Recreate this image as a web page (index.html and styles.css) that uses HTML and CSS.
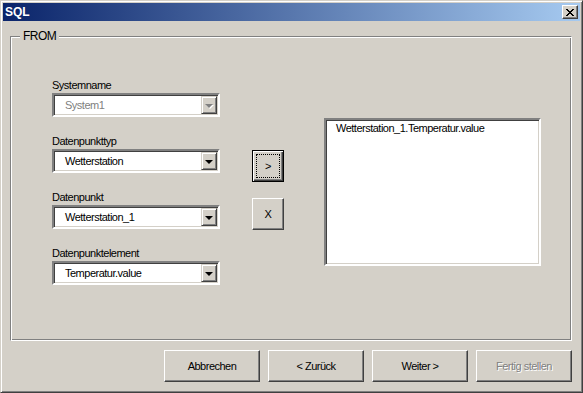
FILE: index.html
```html
<!DOCTYPE html>
<html lang="de">
<head>
    <meta charset="UTF-8">
    <title>SQL</title>
    <link rel="stylesheet" href="styles.css">
</head>
<body>
    <div class="window">
        <div class="titlebar">
            <span class="title">SQL</span>
            <button class="close-btn">
                <svg width="8" height="7" viewBox="0 0 8 7">
                    <path d="M0 0h2v1h1v1h2v-1h1v-1h2v1h-1v1h-1v1h-1v1h1v1h1v1h1v1h-2v-1h-1v-1h-2v1h-1v1h-2v-1h1v-1h1v-1h1v-1h-1v-1h-1v-1h-1z" fill="#000"/>
                </svg>
            </button>
        </div>

        <div class="content">
            <fieldset class="group">
                <legend>FROM</legend>
                <div class="group-body">
                    <div class="fields">
                        <div class="field">
                            <label>Systemname</label>
                            <div class="combo disabled">
                                <span class="combo-text">System1</span>
                                <span class="combo-btn"><span class="arrow"></span></span>
                            </div>
                        </div>
                        <div class="field">
                            <label>Datenpunkttyp</label>
                            <div class="combo">
                                <span class="combo-text">Wetterstation</span>
                                <span class="combo-btn"><span class="arrow"></span></span>
                            </div>
                        </div>
                        <div class="field">
                            <label>Datenpunkt</label>
                            <div class="combo">
                                <span class="combo-text">Wetterstation_1</span>
                                <span class="combo-btn"><span class="arrow"></span></span>
                            </div>
                        </div>
                        <div class="field">
                            <label>Datenpunktelement</label>
                            <div class="combo">
                                <span class="combo-text">Temperatur.value</span>
                                <span class="combo-btn"><span class="arrow"></span></span>
                            </div>
                        </div>
                    </div>

                    <div class="movers">
                        <button class="btn small default"><span class="focus">&gt;</span></button>
                        <button class="btn small">X</button>
                    </div>

                    <div class="listbox">
                        <div class="list-item">Wetterstation_1.Temperatur.value</div>
                    </div>
                </div>
            </fieldset>

            <div class="footer">
                <button class="btn wide">Abbrechen</button>
                <button class="btn wide">&lt; Zurück</button>
                <button class="btn wide">Weiter &gt;</button>
                <button class="btn wide disabled">Fertig stellen</button>
            </div>
        </div>
    </div>
</body>
</html>
```

FILE: styles.css
```css
body {
    margin: 0;
    background: #D4D0C8;
    font-family: "Liberation Sans", Arial, sans-serif;
    font-size: 11px;
    letter-spacing: -0.5px;
    color: #000;
}

.window {
    width: 583px;
    height: 393px;
    box-sizing: border-box;
    border: 1px solid;
    border-color: #D4D0C8 #404040 #404040 #D4D0C8;
    box-shadow: inset 1px 1px #fff, inset -1px -1px #808080;
    padding: 2px;
    display: flex;
    flex-direction: column;
}

/* title bar */
.titlebar {
    height: 18px;
    display: flex;
    align-items: center;
    justify-content: space-between;
    padding: 0 2px 0 2px;
    background: linear-gradient(to right, #0A246A, #A6CAF0);
}
.title {
    color: #fff;
    font-weight: bold;
    font-size: 12px;
    letter-spacing: 0;
}
.close-btn {
    width: 16px;
    height: 14px;
    padding: 0;
    margin: 0;
    display: flex;
    align-items: center;
    justify-content: center;
    background: #D4D0C8;
    border: 1px solid;
    border-color: #fff #404040 #404040 #fff;
    box-shadow: inset -1px -1px #808080;
}

.content {
    flex: 1;
    padding: 9px 8px 0 7px;
    display: flex;
    flex-direction: column;
}

/* group box */
.group {
    margin: 0;
    padding: 0;
    height: 311px;
    box-sizing: border-box;
    border: 1px solid;
    border-color: #808080 #fff #fff #808080;
    box-shadow: inset 1px 1px #fff, inset -1px -1px #808080;
}
.group legend {
    margin-left: 9px;
    padding: 0 3px;
    line-height: 13px;
    font-size: 12px;
    background: #D4D0C8;
}
.group-body {
    display: flex;
    align-items: flex-start;
    padding: 36px 0 0 41px;
}

.fields {
    width: 168px;
    display: flex;
    flex-direction: column;
    gap: 18px;
}
.field label {
    display: block;
    line-height: 13px;
    margin-bottom: 1px;
}

/* combo box */
.combo {
    height: 24px;
    box-sizing: border-box;
    border: 2px solid;
    border-color: #808080 #fff #fff #808080;
    box-shadow: inset 1px 1px #404040, inset -1px -1px #D4D0C8;
    background: #fff;
    display: flex;
    align-items: center;
    padding: 1px;
}
.combo-text {
    flex: 1;
    padding-left: 10px;
}
.combo-btn {
    width: 16px;
    height: 18px;
    box-sizing: border-box;
    background: #D4D0C8;
    border: 1px solid;
    border-color: #D4D0C8 #404040 #404040 #D4D0C8;
    box-shadow: inset 1px 1px #fff, inset -1px -1px #808080;
    display: flex;
    align-items: center;
    justify-content: center;
}
.arrow {
    width: 0;
    height: 0;
    border-left: 4px solid transparent;
    border-right: 4px solid transparent;
    border-top: 4px solid #000;
    margin-top: 1px;
}
.combo.disabled .combo-text {
    color: #808080;
}
.combo.disabled .arrow {
    border-top-color: #808080;
    filter: drop-shadow(1px 1px 0 #fff);
}

/* buttons */
.btn {
    font-family: inherit;
    font-size: 11px;
    letter-spacing: -0.5px;
    color: #000;
    background: #D4D0C8;
    border: 1px solid;
    border-color: #fff #404040 #404040 #fff;
    box-shadow: inset -1px -1px #808080;
    padding: 0;
    margin: 0;
}
.btn.small {
    width: 32px;
    height: 32px;
}
.btn.default {
    border: 1px solid #000;
    box-shadow: inset 1px 1px #fff, inset -1px -1px #404040, inset -2px -2px #808080;
    padding: 3px;
    display: flex;
}
.focus {
    display: flex;
    align-items: center;
    justify-content: center;
    width: 24px;
    height: 24px;
    border: 1px dotted #000;
    box-sizing: border-box;
}
.btn.wide {
    width: 96px;
    height: 32px;
}
.btn.disabled {
    color: #808080;
    text-shadow: 1px 1px #fff;
}

.movers {
    margin-left: 32px;
    margin-top: 71px;
    display: flex;
    flex-direction: column;
    gap: 16px;
}

/* list box */
.listbox {
    margin-left: 40px;
    margin-top: 39px;
    width: 217px;
    height: 148px;
    box-sizing: border-box;
    border: 2px solid;
    border-color: #808080 #fff #fff #808080;
    box-shadow: inset 1px 1px #404040, inset -1px -1px #D4D0C8;
    background: #fff;
    padding: 2px 10px;
}
.list-item {
    line-height: 13px;
}

.footer {
    display: flex;
    justify-content: flex-end;
    gap: 8px;
    padding-top: 9px;
}
```
